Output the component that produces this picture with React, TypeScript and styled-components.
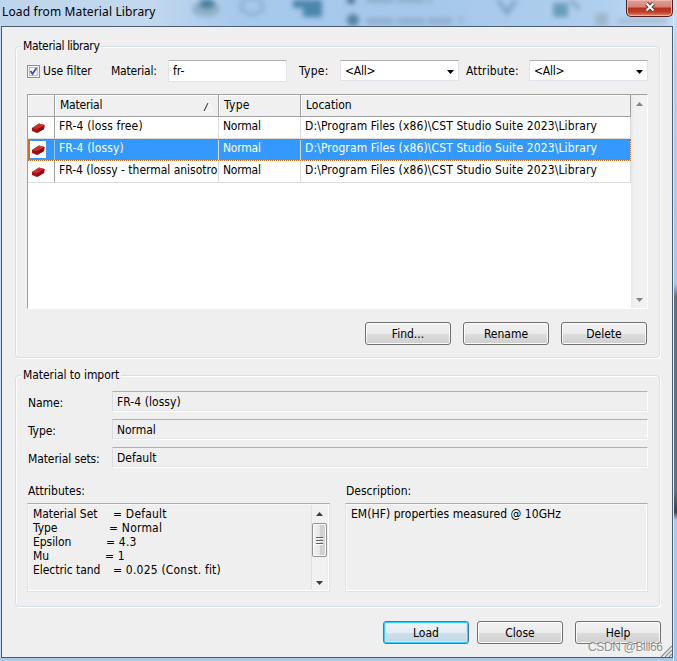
import React from 'react';
import styled, { createGlobalStyle, css } from 'styled-components';

const Global = createGlobalStyle`
  *, *::before, *::after { box-sizing: border-box; }
  body { margin: 0; overflow: hidden; }
  button, input { font: inherit; color: inherit; }
`;

const Desktop = styled.div`
  width: 677px;
  height: 661px;
  display: grid;
  grid-template-columns: 673px 4px;
  background: #a9c9ea;
  font: 12px/14px "DejaVu Sans Condensed", "DejaVu Sans", sans-serif;
  font-stretch: condensed;
  color: #000;
  overflow: hidden;
  position: relative;
`;

const Window = styled.div`
  display: flex;
  flex-direction: column;
  height: 658px;
  padding-left: 1px;
  background: #c6dcf0;
`;

const RightEdge = styled.div`
  background: linear-gradient(#cfe2f6 0, #b4cfec 60px, #a6c6ea 284px, #5e7386 296px, #5e7386 490px, #36434f 512px, #a9c9ec 520px, #9fc4ec 100%);
  border-left: 1px solid #e0edf8;
`;

const TitleBar = styled.header`
  position: relative;
  display: flex;
  justify-content: space-between;
  align-items: flex-start;
  flex: none;
  height: 26px;
  margin-left: -1px;
  background: linear-gradient(90deg, #bfd5ec 0, #c2d8ef 150px, #a7c9eb 235px, #a6c8ea 440px, #b0cfee 600px, #c2daf2 100%);
`;

const Scenery = styled.svg`
  position: absolute;
  inset: 0;
  width: 677px;
  height: 26px;
`;

const Title = styled.h1`
  position: relative;
  margin: 4px 0 0 2px;
  font: 400 12px/16px "Noto Sans", sans-serif;
  letter-spacing: 0.13px;
`;

const CloseBox = styled.button`
  position: relative;
  width: 47px;
  height: 17px;
  padding: 0;
  display: flex;
  justify-content: center;
  border: 1px solid #571c1c;
  border-top: 0;
  border-radius: 0 0 5px 5px;
  box-shadow: inset 0 0 0 1px #efb5a8;
  background: linear-gradient(#dfa095 0, #d5837a 7px, #b92e1d 8px, #c23e28 12px, #e08a6a 100%);
`;

const Client = styled.main`
  flex: 1;
  border: 1px solid #4b5b70;
  padding: 19px 11px 0 13px;
  background: #efefef;
  display: flex;
  flex-direction: column;
`;

const Group = styled.section<{ $height: number }>`
  flex: none;
  width: 645px;
  height: ${p => p.$height}px;
  margin-bottom: 17px;
  padding: 0 11px;
  border: 1px solid #d5dfe5;
  border-radius: 4px;
  box-shadow: inset 1px 1px 0 #fff, 1px 1px 0 #fff;
`;

const Tracked = styled.span<{ $ls?: number }>`
  letter-spacing: ${p => p.$ls ?? 0}px;
  white-space: pre;
`;

const Legend = styled.h2`
  display: table;
  position: relative;
  margin: -8px 0 0 -6px;
  padding: 0 2px;
  font: inherit;
  background: #efefef;
`;

const FilterRow = styled.div`
  display: grid;
  grid-template-columns: 84px 57px 119px 12px 41px 119px 7px 63px 119px;
  align-items: center;
  height: 22px;
  margin-top: 7px;
`;

const CheckLabel = styled.label`
  display: flex;
  align-items: center;
  gap: 3px;
`;

const CheckBox = styled.span`
  width: 13px;
  height: 13px;
  border: 1px solid #8e8f8f;
  background: #f4f4f4;
  box-shadow: inset 0 0 0 1px #f4f4f4, inset 0 0 0 2px #b9c0c8;
  display: flex;
`;

const sunken = css`
  border: 1px solid #e2e3ea;
  border-top-color: #abadb3;
`;

const TextInput = styled.div`
  ${sunken}
  height: 22px;
  padding: 3px 4px;
  border-radius: 1px;
  background: #fff;
`;

const Combo = styled.div`
  ${sunken}
  display: flex;
  justify-content: space-between;
  height: 21px;
  margin-bottom: 1px;
  padding: 3px 4px 0 4px;
  background: #fff;
`;

const ComboArrow = styled.svg`
  margin-top: 6px;
  width: 7px;
  height: 4px;
`;

const Table = styled.div`
  display: grid;
  grid-template-columns: 603px 16px;
  width: 621px;
  height: 215px;
  margin-top: 12px;
  border-left: 1px solid #a0a0a0;
  border-top: 1px solid #a0a0a0;
  border-right: 1px solid #fff;
  border-bottom: 1px solid #fff;
  background: #fff;
`;

const columns = '27px 164px 82px 330px';

const HeadRow = styled.div`
  display: grid;
  grid-template-columns: ${columns};
  height: 22px;
  border-bottom: 1px solid #a0a0a0;
  background: #f0f0f0;
`;

const HeadCell = styled.div`
  display: flex;
  justify-content: space-between;
  padding: 3px 5px 0 5px;
  border-right: 1px solid #a0a0a0;
  box-shadow: inset 1px 1px 0 #fff;
`;

const SortMark = styled.svg`
  width: 10px;
  height: 10px;
  margin: 4px 0 0 0;
`;

const BodyRow = styled.div<{ $selected?: boolean }>`
  display: grid;
  grid-template-columns: ${columns};
  height: 22px;
  border-bottom: 1px solid #dcdcdc;
  color: ${p => (p.$selected ? '#fff' : '#000')};
  background: ${p => (p.$selected ? '#3399ff' : '#fff')};
  outline: ${p => (p.$selected ? '1px dotted #c4691d' : 'none')};
  outline-offset: -1px;
`;

const BodyCell = styled.div`
  padding: 2px 0 0 4px;
  border-right: 1px solid #dcdcdc;
`;

const IconCell = styled.div<{ $selected?: boolean }>`
  border-right: 1px solid ${p => (p.$selected ? '#a9c4df' : '#a0a0a0')};
  padding: 2px 0 0 2px;
`;

const Brick = styled.svg`
  display: block;
  width: 16px;
  height: 17px;
  background: #fff;
`;

const ScrollTrack = styled.div`
  display: flex;
  flex-direction: column;
  align-items: center;
  justify-content: space-between;
  height: 100%;
  padding: 7px 0 6px;
  background: linear-gradient(90deg, #e6e6e6, #f0f0f0 3px, #f2f2f2);
`;

const ScrollArrow = styled.svg`
  width: 7px;
  height: 4px;
  display: block;
`;

const ButtonRow = styled.div<{ $top: number; $right: number }>`
  display: flex;
  justify-content: flex-end;
  gap: 12px;
  margin: ${p => p.$top}px ${p => p.$right}px 0 0;
`;

const Button = styled.button<{ $primary?: boolean; $nudge?: number }>`
  width: 86px;
  height: 23px;
  margin: 0 ${p => p.$nudge ?? 0}px 0 0;
  padding: 0;
  border: 1px solid ${p => (p.$primary ? '#3c7fb1' : '#707070')};
  border-radius: 3px;
  box-shadow: ${p => (p.$primary ? 'inset 0 0 0 1px #35ccf5, inset 0 0 0 2px #c4effb' : 'inset 0 0 0 1px #fbfbfb')};
  background: ${p =>
    p.$primary
      ? 'linear-gradient(#eef4f7 0, #e2edf3 50%, #cde0ea 51%, #bfd7e4 100%)'
      : 'linear-gradient(#f2f2f2 0, #ebebeb 50%, #dddddd 51%, #cfcfcf 100%)'};
`;

const FieldRow = styled.div`
  display: grid;
  grid-template-columns: 84px 536px;
  height: 21px;
  margin: 0 0 7px 1px;
  align-items: center;
`;

const FieldLabel = styled.div`
  padding-top: 3px;
`;

const ReadOnly = styled.div`
  border: 1px solid #fff;
  border-top-color: #aeb0b5;
  border-left-color: #d9dce2;
  height: 21px;
  padding: 3px 4px;
  box-shadow: inset 0 -1px 0 #e3e5ea;
`;

const Fields = styled.div`
  margin-top: 9px;
`;

const Details = styled.div`
  display: grid;
  grid-template-columns: 303px 303px;
  column-gap: 15px;
  margin-top: 16px;
`;

const DetailTitle = styled.h3`
  margin: 0 0 5px 1px;
  font: inherit;
`;

const DetailBox = styled.div`
  display: flex;
  justify-content: space-between;
  height: 89px;
  padding: 1px 2px 1px 5px;
  border: 1px solid #dfe2e8;
  border-top-color: #a9abb0;
  box-shadow: inset -1px -1px 0 #fff, inset 1px 1px 0 #f8f8f8;
`;

const Lines = styled.div`
  padding-top: 2px;
`;

const AttributeRow = styled.div<{ $name: number }>`
  display: grid;
  grid-template-columns: ${p => p.$name}px auto;
  height: 14px;
`;

const MiniBar = styled.div`
  display: flex;
  flex-direction: column;
  align-items: center;
  width: 16px;
  padding: 7px 0 5px;
  border-left: 1px solid #e2e2e2;
  background: #f1f1f1;
`;

const Thumb = styled.div`
  display: flex;
  flex-direction: column;
  align-items: center;
  justify-content: center;
  gap: 2px;
  width: 15px;
  height: 34px;
  margin: 7px 0 auto -1px;
  border: 1px solid #949494;
  border-radius: 2px;
  box-shadow: inset 0 0 0 1px #fafafa;
  background: linear-gradient(90deg, #f4f4f4, #e6e6e6 50%, #cfcfcf 54%, #d7d7d7);
`;

const Grip = styled.i`
  width: 7px;
  height: 1px;
  background: #606060;
  box-shadow: 0 1px 0 #fff;
`;

const Watermark = styled.div`
  position: absolute;
  left: 588px;
  top: 640px;
  font: 12px/15px "Liberation Sans", sans-serif;
  letter-spacing: -0.35px;
  color: #8f8f8f;
  text-shadow: 1px 1px 0 #f8f8f8;
  white-space: nowrap;
`;

const SizeGrip = styled.svg`
  position: absolute;
  left: 660px;
  top: 645px;
  width: 12px;
  height: 12px;
`;

const library = 'D:\\Program Files (x86)\\CST Studio Suite 2023\\Library';
const materials = [
  { name: 'FR-4 (loss free)', ls: 0.15 },
  { name: 'FR-4 (lossy)', ls: 0.15, selected: true },
  { name: 'FR-4 (lossy - thermal anisotro', ls: -0.02 },
];
const fields = [
  { label: 'Name:', value: 'FR-4 (lossy)', ls: 0.05 },
  { label: 'Type:', value: 'Normal', ls: -0.05 },
  { label: 'Material sets:', value: 'Default', ls: 0 },
];
const attributes = [
  { name: 'Material Set', value: '= Default', w: 80 },
  { name: 'Type', value: '= Normal', w: 76 },
  { name: 'Epsilon', value: '= 4.3', w: 73 },
  { name: 'Mu', value: '= 1', w: 72 },
  { name: 'Electric tand', value: '= 0.025 (Const. fit)', w: 80 },
];

function MaterialIcon() {
  return (
    <Brick viewBox="0 0 16 17">
      <path d="M2 9 9 4.5 14.5 6 14 10 7 14 2 12Z" fill="#a90f14" />
      <path d="M2 9 9 4.5 14.5 6 7.5 10Z" fill="#d63a3c" />
      <path d="M7.5 10 14.5 6 14 10 7 14Z" fill="#8c0a10" />
      <path d="M4 8.9 9 5.7 11.5 6.2 6.5 9.3Z" fill="#c3262b" />
    </Brick>
  );
}

function Select() {
  return (
    <Combo>
      <Tracked $ls={-0.25}>&lt;All&gt;</Tracked>
      <ComboArrow viewBox="0 0 7 4"><path d="M0 0H7L3.5 4Z" fill="#000" /></ComboArrow>
    </Combo>
  );
}

function Arrow({ down, dark }: { down?: boolean; dark?: boolean }) {
  return (
    <ScrollArrow viewBox="0 0 7 4">
      <path d={down ? 'M0 0H7L3.5 4Z' : 'M0 4H7L3.5 0Z'} fill={dark ? '#3c3c3c' : '#868686'} />
    </ScrollArrow>
  );
}

export default function App() {
  return (
    <Desktop>
      <Global />
      <Window>
        <TitleBar>
          <Scenery viewBox="0 0 677 26">
            <defs>
              <filter id="soft" x="-30%" y="-50%" width="160%" height="200%"><feGaussianBlur stdDeviation="2.4" /></filter>
            </defs>
            <g filter="url(#soft)">
              <ellipse cx="206" cy="9" rx="14" ry="8" fill="#8fb0c8" />
              <ellipse cx="207" cy="4" rx="8" ry="5" fill="#467f9f" />
              <ellipse cx="252" cy="6" rx="11" ry="8" fill="none" stroke="#8badc9" strokeWidth="3" />
              <path d="M293 0H322V17H303V8H293Z" fill="#4c86ac" />
              <circle cx="351" cy="0" r="4" fill="#456f8e" />
              <circle cx="353" cy="20" r="6" fill="#5280a0" />
              <path d="M366 0H432M366 21H452" stroke="#8eafcc" strokeWidth="6" strokeDasharray="28 3" />
              <path d="M498 0 507 13 516 0" fill="none" stroke="#7ea6c3" strokeWidth="4" />
              <path d="M553 3H568V17H553Z" fill="#6a9cbc" />
              <path d="M570 0 580 9" stroke="#89a9c2" strokeWidth="4" />
              <path d="M597 15H606V24H597ZM617 21H667" fill="#9ab4cc" stroke="#a0b8ce" strokeWidth="4" />
              <circle cx="461" cy="20" r="4" fill="#9bbcdb" />
            </g>
          </Scenery>
          <Title>Load from Material Library</Title>
          <CloseBox aria-label="Close window">
            <svg width="12" height="12" viewBox="0 0 12 12">
              <path d="M2.5 3.5 9.5 10.5M9.5 3.5 2.5 10.5" stroke="#51363a" strokeWidth="4" />
              <path d="M2.5 3.5 9.5 10.5M9.5 3.5 2.5 10.5" stroke="#f4f4f4" strokeWidth="2.2" />
            </svg>
          </CloseBox>
        </TitleBar>
        <Client>
          <Group $height={312}>
            <Legend><Tracked $ls={-0.35}>Material library</Tracked></Legend>
            <FilterRow>
              <CheckLabel>
                <CheckBox>
                  <svg width="11" height="11" viewBox="0 0 11 11"><path d="M2.5 5 4.5 8 8.5 2" fill="none" stroke="#42539c" strokeWidth="1.8" /></svg>
                </CheckBox>
                <Tracked>Use filter</Tracked>
              </CheckLabel>
              <Tracked $ls={-0.2}>Material:</Tracked>
              <TextInput>fr-</TextInput>
              <span />
              <Tracked $ls={0.3}>Type:</Tracked>
              <Select />
              <span />
              <Tracked $ls={0.15}>Attribute:</Tracked>
              <Select />
            </FilterRow>
            <Table>
              <div>
                <HeadRow>
                  <HeadCell />
                  <HeadCell>
                    <Tracked $ls={-0.2}>Material</Tracked>
                    <SortMark viewBox="0 0 10 10">
                      <path d="M1 9H9L5.5 1" fill="none" stroke="#fff" />
                      <path d="M1 9 5 1" fill="none" stroke="#222" />
                    </SortMark>
                  </HeadCell>
                  <HeadCell><Tracked $ls={0.3}>Type</Tracked></HeadCell>
                  <HeadCell><Tracked>Location</Tracked></HeadCell>
                </HeadRow>
                {materials.map(m => (
                  <BodyRow key={m.name} $selected={m.selected}>
                    <IconCell $selected={m.selected}><MaterialIcon /></IconCell>
                    <BodyCell><Tracked $ls={m.ls}>{m.name}</Tracked></BodyCell>
                    <BodyCell><Tracked $ls={-0.2}>Normal</Tracked></BodyCell>
                    <BodyCell><Tracked $ls={0.12}>{library}</Tracked></BodyCell>
                  </BodyRow>
                ))}
              </div>
              <ScrollTrack><Arrow /><Arrow down /></ScrollTrack>
            </Table>
            <ButtonRow $top={13} $right={1}>
              <Button>Find...</Button>
              <Button>Rename</Button>
              <Button>Delete</Button>
            </ButtonRow>
          </Group>
          <Group $height={232}>
            <Legend><Tracked $ls={-0.05}>Material to import</Tracked></Legend>
            <Fields>
              {fields.map(f => (
                <FieldRow key={f.label}>
                  <FieldLabel><Tracked $ls={-0.1}>{f.label}</Tracked></FieldLabel>
                  <ReadOnly><Tracked $ls={f.ls}>{f.value}</Tracked></ReadOnly>
                </FieldRow>
              ))}
            </Fields>
            <Details>
              <div>
                <DetailTitle>Attributes:</DetailTitle>
                <DetailBox>
                  <Lines>
                    {attributes.map(a => (
                      <AttributeRow key={a.name} $name={a.w}>
                        <Tracked $ls={-0.05}>{a.name}</Tracked>
                        <Tracked $ls={0.2}>{a.value}</Tracked>
                      </AttributeRow>
                    ))}
                  </Lines>
                  <MiniBar>
                    <Arrow dark />
                    <Thumb><Grip /><Grip /><Grip /></Thumb>
                    <Arrow down dark />
                  </MiniBar>
                </DetailBox>
              </div>
              <div>
                <DetailTitle>Description:</DetailTitle>
                <DetailBox>
                  <Lines><Tracked $ls={0.05}>EM(HF) properties measured @ 10GHz</Tracked></Lines>
                </DetailBox>
              </div>
            </Details>
          </Group>
          <ButtonRow $top={-3} $right={0}>
            <Button $primary $nudge={-4}>Load</Button>
            <Button>Close</Button>
            <Button>Help</Button>
          </ButtonRow>
        </Client>
      </Window>
      <RightEdge />
      <SizeGrip viewBox="0 0 12 12">
        <path d="M1 12 12 1M5 12 12 5M9 12 12 9" stroke="#8b8b8b" strokeWidth="1.2" />
      </SizeGrip>
      <Watermark>CSDN @Bill66</Watermark>
    </Desktop>
  );
}
